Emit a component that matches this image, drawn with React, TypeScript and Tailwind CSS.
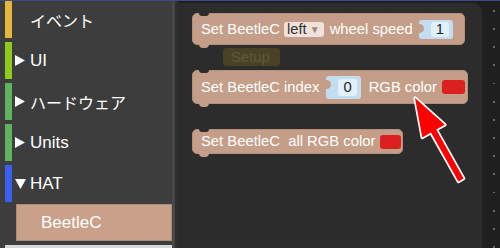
import React from "react";

type Cat = { label: string; color: string; arrow?: "right" | "down" | null; jp?: boolean };

const cats: Cat[] = [
  { label: "イベント", color: "bg-[#e6b73a]", arrow: null, jp: true },
  { label: "UI", color: "bg-[#8fcb1c]", arrow: "right" },
  { label: "ハードウェア", color: "bg-[#5db35e]", arrow: "right", jp: true },
  { label: "Units", color: "bg-[#5db35e]", arrow: "right" },
  { label: "HAT", color: "bg-[#3b5ff2]", arrow: "down" },
];

const Caret = ({ dir }: { dir?: "right" | "down" | null }) => (
  <span className="w-[15px] flex items-center">
    {dir === "right" && (
      <svg width="10" height="11" viewBox="0 0 10 11">
        <polygon points="0,0 10,5.5 0,11" fill="#fff" />
      </svg>
    )}
    {dir === "down" && (
      <svg width="11" height="10" viewBox="0 0 11 10">
        <polygon points="0,0 11,0 5.5,10" fill="#fff" />
      </svg>
    )}
  </span>
);

const Socket = ({ value, tall }: { value: string; tall?: boolean }) => (
  <span
    className={`relative flex items-center bg-[#c3ddf2] rounded-[3px] pl-[12px] pr-[4px] ${
      tall ? "h-[23px]" : "h-[19px]"
    }`}
  >
    <span className="absolute left-0 top-[4px] w-[5px] h-[9px] bg-[#c49e88] rounded-r-full" />
    <span
      className={`flex items-center justify-center bg-[#e2f0fb] rounded-[3px] text-[#222] px-[5px] ${
        tall ? "h-[17px]" : "h-[15px]"
      }`}
    >
      {value}
    </span>
  </span>
);

const Swatch = ({ w }: { w: string }) => (
  <span className={`${w} h-[14px] bg-[#dc1f1f] rounded-[3px]`} />
);

const Block = ({
  className,
  children,
}: {
  className: string;
  children: React.ReactNode;
}) => (
  <div
    className={`absolute left-[14px] flex items-center pl-[8px] bg-[#c49e88] border border-[#b2907b] rounded-[5px] text-white whitespace-pre ${className}`}
  >
    <span className="absolute -top-px left-[6px] w-[10px] h-[3px] bg-[#2c2c2c] rounded-b-[4px]" />
    <span className="absolute -bottom-[4px] left-[6px] w-[10px] h-[4px] bg-[#c49e88] rounded-b-[4px]" />
    {children}
  </div>
);

export default function App() {
  return (
    <div className="relative w-[500px] h-[248px] overflow-hidden flex flex-col bg-[#1f1f1f] font-['Liberation_Sans',Arial,sans-serif]">
      <div className="h-px bg-[#3b4a8f]" />
      <div className="flex flex-1 min-h-0">
        {/* toolbox */}
        <aside className="w-[172px] bg-[#3d3d3d] pl-[5px] flex flex-col text-white text-[17px]">
          <div className="-mt-[4px] flex flex-col">
            {cats.map((c) => (
              <div key={c.label} className="flex pt-[4px] h-[41px]">
                <span className={`w-[7px] h-[37px] ${c.color}`} />
                <div className="flex items-center pl-[3px]">
                  <Caret dir={c.arrow} />
                  <span
                    className={
                      c.jp
                        ? "text-[16px] font-['Noto_Sans_CJK_JP',sans-serif]"
                        : ""
                    }
                  >
                    {c.label}
                  </span>
                </div>
              </div>
            ))}
          </div>
          <div className="mt-[2px] ml-[11px] h-[38px] flex items-center pl-[24px] bg-[#c9a18a] border border-[#a98b78]">
            BeetleC
          </div>
          <div className="mt-[4px] h-[3px] bg-[#d8d8d8]" />
        </aside>
        <div className="w-[3px] bg-[#474747]" />
        <div className="w-[3px] bg-[#2e2e2e]" />

        {/* workspace */}
        <main className="relative flex-1 bg-[#2c2c2c] rounded-tr-[9px] mt-[2px] bg-[radial-gradient(circle,#313131_1px,transparent_1px)] bg-[size:20px_20px] text-[14.8px]">
          <Block className="top-[10px] w-[273px] h-[32px]">
            <span>Set BeetleC</span>
            <span className="ml-[4px] flex items-center h-[15px] bg-[#f0e2da] rounded-[3px] pl-[3px] pr-[4px] text-[#333]">
              left
              <span className="ml-[3px] text-[10px] text-[#9a8a80]">▼</span>
            </span>
            <span className="ml-[6px]">wheel speed</span>
            <span className="ml-[6px]">
              <Socket value="1" />
            </span>
          </Block>

          <div className="absolute left-[45px] top-[45px] w-[57px] h-[18px] pl-[8px] bg-[#4a4226] rounded-[4px] text-[#625939] flex items-center">
            Setup
          </div>

          <Block className="top-[67px] w-[276px] h-[34px]">
            <span>Set BeetleC index</span>
            <span className="ml-[7px]">
              <Socket value="0" tall />
            </span>
            <span className="ml-[8px]">RGB color</span>
            <span className="ml-[5px] flex">
              <Swatch w="w-[23px]" />
            </span>
          </Block>

          <Block className="top-[126px] w-[211px] h-[25px]">
            <span>Set BeetleC  all RGB color</span>
            <span className="ml-[5px] flex">
              <Swatch w="w-[21px]" />
            </span>
          </Block>
        </main>

        {/* scroll strip */}
        <div className="w-[18px] bg-[#1f1f1f] flex flex-col items-center pt-[9px] gap-[16.3px] pl-[6px]">
          {Array.from({ length: 14 }).map((_, i) => (
            <span key={i} className="w-[2px] h-[2px] bg-[#6a6a6a]" />
          ))}
        </div>
      </div>

      {/* annotation arrow */}
      <svg
        className="absolute inset-0 pointer-events-none"
        width="500"
        height="248"
        viewBox="0 0 500 248"
      >
        <polygon
          points="458.4,181.5 431,132.6 422.3,137.5 415,98 444.9,124.7 436.2,129.6 463.6,178.5"
          fill="#ff0000"
          stroke="#ffffff"
          strokeWidth="3.5"
          strokeLinejoin="round"
          paintOrder="stroke"
        />
      </svg>
    </div>
  );
}
